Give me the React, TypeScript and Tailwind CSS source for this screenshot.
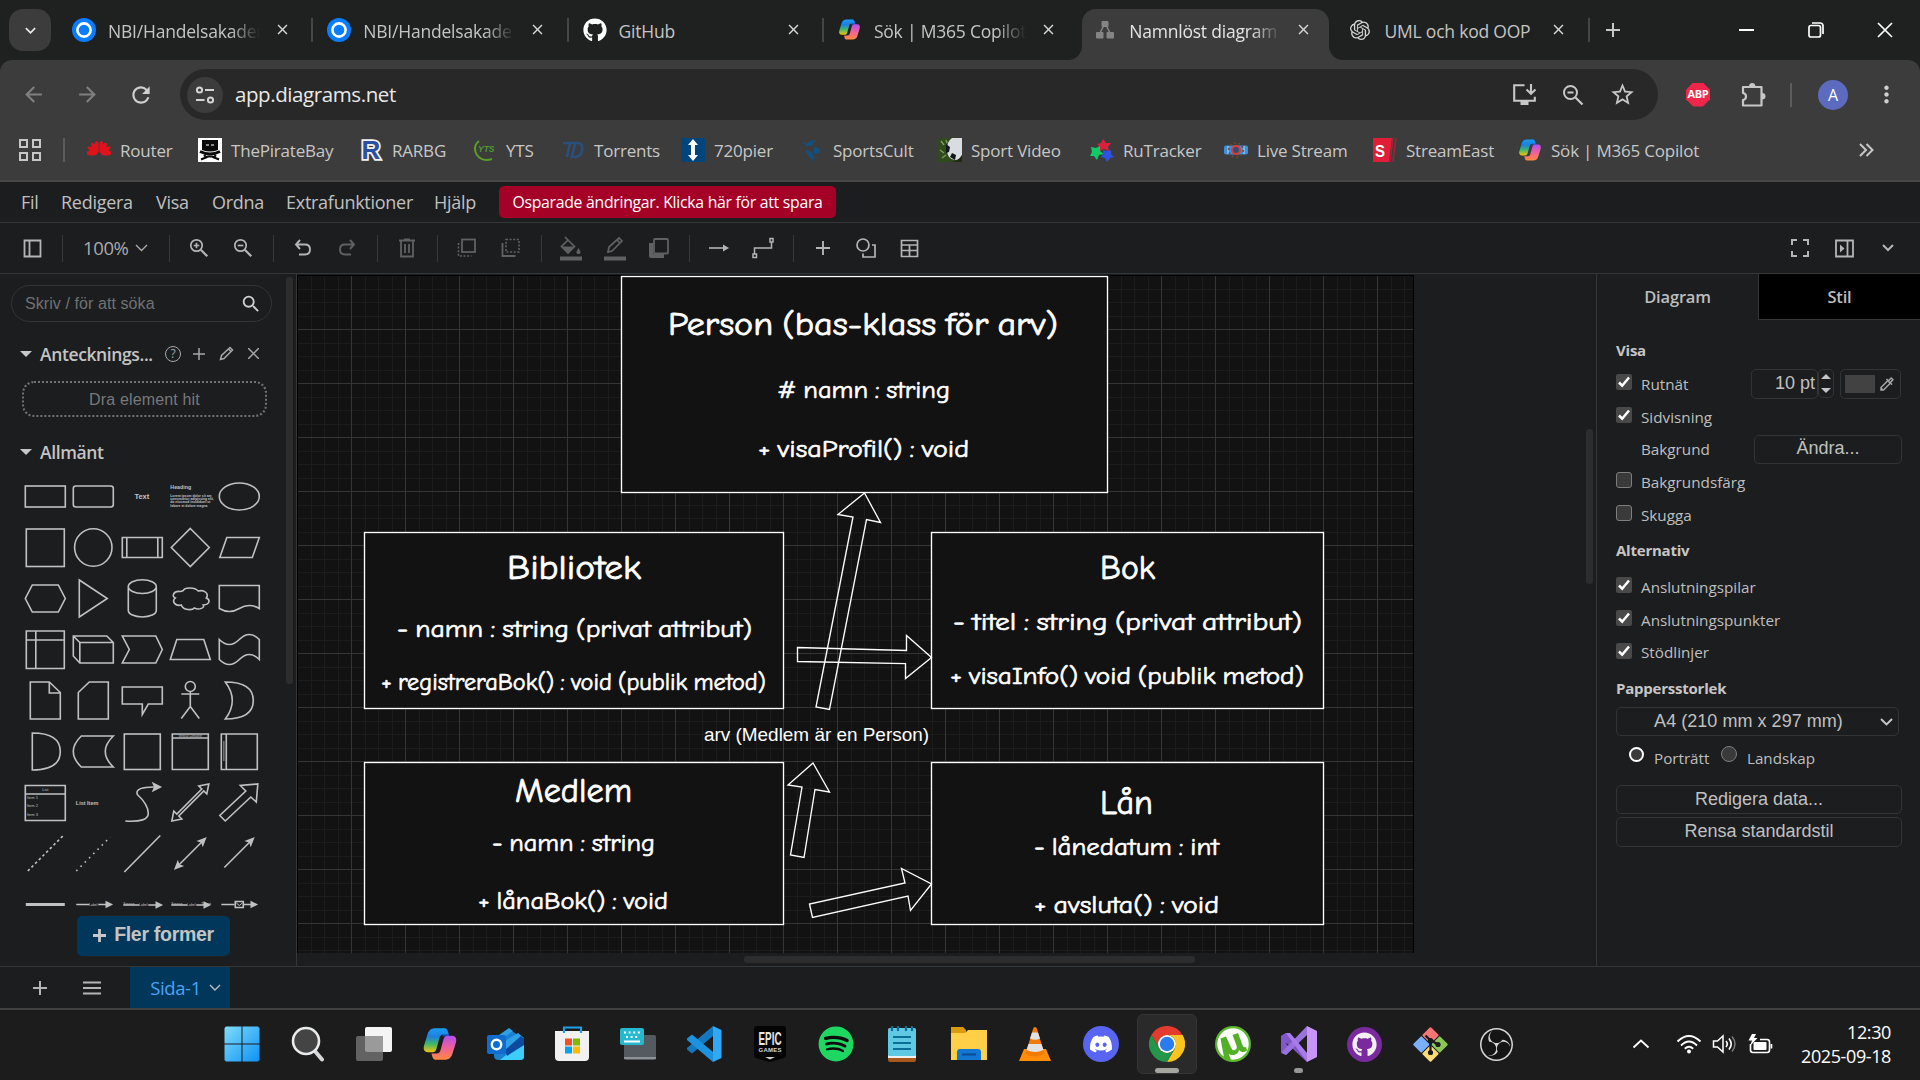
import React from "react";
import {
  FaGithub,
  FaSpotify,
  FaDiscord,
} from "react-icons/fa";
import { SiOpenai, SiObsstudio } from "react-icons/si";
import {
  MdArrowBack,
  MdArrowForward,
  MdRefresh,
  MdClose,
  MdStarBorder,
  MdMoreVert,
  MdKeyboardArrowDown,
  MdAdd,
  MdSearch,
  MdOutlineColorize,
} from "react-icons/md";

type Children = { children?: React.ReactNode };

function Svg({ w, h, vb, children }: { w: number; h: number; vb: string } & Children) {
  return (
    <svg width={w} height={h} viewBox={vb} fill="none" className="shrink-0">
      {children}
    </svg>
  );
}

function Copilot({ size, id }: { size: number; id: string }) {
  const d =
    "M9 1.5h6c1.2 0 1.8 1 2.1 2l.6 2.2H14.2c-1.5 0-2.2 1-2.5 2L9.6 15.3c-.4 1.3-1.1 2.2-2.5 2.2H4C1.600 17.500.6 15.500 1.400 13L3.700 5.500C4.500 2.900 6 1.500 9 1.500z";
  return (
    <Svg w={size} h={size} vb="0 0 24 24">
      <defs>
        <linearGradient id={id + "a"} x1="0" y1="0" x2="0" y2="1">
          <stop offset="0" stopColor="#1a9df0" />
          <stop offset=".35" stopColor="#1d7fe0" />
          <stop offset=".65" stopColor="#3fb86a" />
          <stop offset="1" stopColor="#f2c40c" />
        </linearGradient>
        <linearGradient id={id + "b"} x1="0" y1="1" x2="0" y2="0">
          <stop offset="0" stopColor="#b04ff0" />
          <stop offset=".5" stopColor="#f0609a" />
          <stop offset="1" stopColor="#ff8a3c" />
        </linearGradient>
      </defs>
      <path d="M13 1.500h2.200c1.200 0 1.800 1 2.100 2l1 3.500h-4.500z" fill="#1549b8" />
      <path d={d} fill={`url(#${id}a)`} />
      <path d={d} fill={`url(#${id}b)`} transform="rotate(180 12 12)" />
    </Svg>
  );
}

function ItsLearning() {
  return (
    <Svg w={24} h={24} vb="0 0 24 24">
      <circle cx="12" cy="12" r="12" fill="#0a7cff" />
      <circle cx="12" cy="12" r="6.600" stroke="#fff" strokeWidth="2.600" />
    </Svg>
  );
}

function DiagramFavicon() {
  return (
    <Svg w={20} h={20} vb="0 0 20 20">
      <path d="M9 5L4 15M11 5l5 10" stroke="#858585" strokeWidth="1.600" />
      <rect x="6.500" y="1" width="7" height="6" rx="1" fill="#858585" />
      <rect x="1" y="12" width="7.500" height="6.500" rx="1" fill="#858585" />
      <rect x="11.500" y="12" width="7.500" height="6.500" rx="1" fill="#858585" />
    </Svg>
  );
}

function Tab({ icon, label, active, fade }: { icon: React.ReactNode; label: string; active?: boolean; fade?: boolean }) {
  return (
    <div className="relative flex h-[60px] w-[255.300px] shrink-0 items-center pb-[1px]">
      {active && (
        <>
          <div className="absolute top-[9px] left-[4px] h-[51px] w-[247px] rounded-t-[14px] bg-[#3c3c3c]" />
          <svg className="absolute bottom-0 left-[-10px]" width="14" height="14" viewBox="0 0 14 14">
            <path d="M14 0v14H0A14 14 0 0 0 14 0z" fill="#3c3c3c" />
          </svg>
          <svg className="absolute bottom-0 left-[251px]" width="14" height="14" viewBox="0 0 14 14">
            <path d="M0 0v14h14A14 14 0 0 1 0 0z" fill="#3c3c3c" />
          </svg>
        </>
      )}
      <div className="relative ml-[14px] flex w-[26px] justify-center">{icon}</div>
      <div
        className={
          "relative ml-[11px] w-[152px] pt-[3px] text-[17.500px] leading-[26px] whitespace-nowrap tracking-[-0.012em] " +
          (active ? "text-[#e4e4e4]" : "text-[#c4c4c4]") +
          (fade ? " [mask-image:linear-gradient(to_right,#000_122px,transparent_152px)]" : "")
        }
      >
        {label}
      </div>
      <MdClose className="relative ml-[14px] text-[17px] text-[#d8d8d8]" />
    </div>
  );
}

function TabSep() {
  return <div className="relative z-10 -mx-[1px] h-[24px] w-[2px] shrink-0 self-center bg-[#444645]" />;
}

function Bookmark({ icon, label, w }: { icon: React.ReactNode; label: string; w: string }) {
  return (
    <div className={"flex shrink-0 items-center " + w}>
      <div className="flex w-[24px] shrink-0 justify-center">{icon}</div>
      <span className="ml-[9px] pt-[1px] text-[17px] leading-[24px] whitespace-nowrap tracking-[-0.012em] text-[#c7c7c7]">{label}</span>
    </div>
  );
}

const bookmarks: { label: string; w: string; icon: React.ReactNode }[] = [
  {
    label: "Router",
    w: "w-[111px]",
    icon: (
      <Svg w={24} h={20} vb="0 0 24 20">
        <g fill="#e2121c">
          {[-84, -58, -34, -12, 12, 34, 58, 84].map((a) => (
            <ellipse key={a} cx="12" cy="6.500" rx="2.300" ry="5.800" transform={`rotate(${a} 12 14)`} />
          ))}
        </g>
        <path d="M12 0v14M12 14L3 18M12 14l9 4" stroke="#3c3c3c" strokeWidth=".8" />
      </Svg>
    ),
  },
  {
    label: "ThePirateBay",
    w: "w-[161px]",
    icon: (
      <Svg w={24} h={24} vb="0 0 24 24">
        <rect width="24" height="24" fill="#fff" />
        <path d="M4 2h16v10q-8 3-16 0z" fill="#0a0a0a" />
        <path d="M8 6h3v2H8zM13 6h3v2h-3z" fill="#8a8a8a" />
        <path d="M2 13.500q10 5 20 0" stroke="#0a0a0a" strokeWidth="3" />
        <path d="M3 21.500l7-3h4l7 3M6 17l3 3M18 17l-3 3" stroke="#0a0a0a" strokeWidth="2" />
      </Svg>
    ),
  },
  {
    label: "RARBG",
    w: "w-[114px]",
    icon: (
      <Svg w={24} h={24} vb="0 0 24 24">
        <text x="2.500" y="21" fontFamily="Liberation Sans, sans-serif" fontWeight="700" fontSize="26" fill="#2b4fa3" stroke="#f2f2f2" strokeWidth="3.600" paintOrder="stroke">
          R
        </text>
      </Svg>
    ),
  },
  {
    label: "YTS",
    w: "w-[88px]",
    icon: (
      <Svg w={24} h={24} vb="0 0 24 24">
        <path d="M6 3Q-1 9 4 17q5 7 15 4" stroke="#5a9e2a" strokeWidth="2" />
        <text x="5" y="14" fontFamily="Liberation Sans, sans-serif" fontStyle="italic" fontWeight="700" fontSize="8.500" fill="#4f9a2c">
          YTS
        </text>
      </Svg>
    ),
  },
  {
    label: "Torrents",
    w: "w-[120px]",
    icon: (
      <Svg w={24} h={24} vb="0 0 24 24">
        <path d="M2 5h12M9 5L6 19M14 5h3q5 0 4 7t-7 7h-3l3-14" stroke="#2b4f7c" strokeWidth="2.600" />
      </Svg>
    ),
  },
  {
    label: "720pier",
    w: "w-[119px]",
    icon: (
      <Svg w={24} h={24} vb="0 0 24 24">
        <rect width="24" height="24" rx="1" fill="#00467c" />
        <path d="M12 1l5 6h-3v10h3l-5 6-5-6h3V7H7z" fill="#fff" />
      </Svg>
    ),
  },
  {
    label: "SportsCult",
    w: "w-[138px]",
    icon: (
      <Svg w={24} h={24} vb="0 0 24 24">
        <path d="M16 2Q6 3 5 9l7-2zM5 12q3 8 10 11l-3-9zM14 9q6 0 6 4t-6 2zM3 5l3-1-1 3z" fill="#12507f" />
      </Svg>
    ),
  },
  {
    label: "Sport Video",
    w: "w-[152px]",
    icon: (
      <Svg w={24} h={24} vb="0 0 24 24">
        <rect width="24" height="24" fill="#2f4a1c" />
        <path d="M3 3l3 4M2 12l4 3M4 20l4-3M8 2l1 3" stroke="#7d9a5a" strokeWidth="1.500" />
        <path d="M24 0v17q-2 5-7 5-8-1-8-10Q9 3 14 0z" fill="#d9dce0" />
        <path d="M8 6l4 3-1 5-3 1zM14 15l4 2-1 5-5-3z" fill="#15181a" />
        <path d="M24 17v7H12q8 0 12-7z" fill="#1c2b12" />
      </Svg>
    ),
  },
  {
    label: "RuTracker",
    w: "w-[134px]",
    icon: (
      <Svg w={24} h={24} vb="0 0 24 24">
        <path d="M13 1l3 4 5 0-3 4 1 4-5-2-4 2 0-4-3-3 4-1z" fill="#d9213c" />
        <path d="M1 9l5 1 4-2 0 5 4 3-5 1-2 5-3-4-4 0 2-4z" fill="#12c968" />
        <path d="M13 12l4 1 4-1 0 4 3 3-4 1-3 4-2-4-4-1 2-3z" fill="#2f52e0" />
      </Svg>
    ),
  },
  {
    label: "Live Stream",
    w: "w-[149px]",
    icon: (
      <Svg w={24} h={24} vb="0 0 24 24">
        <rect x="0" y="7.500" width="24" height="9" rx="2" fill="#3d8fdc" />
        <path d="M4 8v8M20 8v8" stroke="#8cc4f2" strokeWidth="1.500" />
        <circle cx="12" cy="12" r="7.200" stroke="#6b4a35" strokeWidth="1.600" strokeDasharray="2 2.500" />
        <circle cx="12" cy="12" r="4" fill="#27507a" stroke="#e03a2f" strokeWidth="2.200" />
      </Svg>
    ),
  },
  {
    label: "StreamEast",
    w: "w-[145px]",
    icon: (
      <Svg w={24} h={24} vb="0 0 24 24">
        <path d="M0 0h19l-3 24H0z" fill="#e01e37" />
        <path d="M20 0l-3 24M23 0l-3 24" stroke="#9c2537" strokeWidth="1.500" />
        <text x="2" y="19" fontFamily="Liberation Sans, sans-serif" fontWeight="700" fontSize="17" textLength="10" lengthAdjust="spacingAndGlyphs" fill="#fff">
          S
        </text>
      </Svg>
    ),
  },
  { label: "Sök | M365 Copilot", w: "w-[190px]", icon: <Copilot size={24} id="bm" /> },
];

function IconBtn({ children, dim }: { dim?: boolean } & Children) {
  return (
    <div className={"flex h-full w-[44px] shrink-0 items-center justify-center " + (dim ? "text-[#606163]" : "text-[#b4b5b6]")}>
      {children}
    </div>
  );
}

function ToolSep() {
  return (
    <div className="flex w-[16px] shrink-0 justify-center">
      <div className="h-[27px] w-px bg-[#37383a]" />
    </div>
  );
}

function Magnifier({ sign }: { sign: "plus" | "minus" }) {
  return (
    <Svg w={20} h={20} vb="0 0 20 20">
      <g stroke="currentColor" strokeWidth="1.700">
        <circle cx="7.500" cy="7.500" r="5.700" />
        <path d="M11.800 11.800l6.500 6.500" strokeWidth="2.200" />
        <path d={sign === "plus" ? "M4.700 7.500h5.600M7.500 4.700v5.600" : "M4.700 7.500h5.600"} />
      </g>
    </Svg>
  );
}

const S = "#c0c1c2";

function Cell({ children }: Children) {
  return (
    <svg width="48.600" height="51" viewBox="-24.300 -25.500 48.600 51" fill="none" stroke={S} strokeWidth="1.600">
      {children}
    </svg>
  );
}

function Tiny({ x, y, size, children, bold, anchor }: { x: number; y: number; size: number; bold?: boolean; anchor?: "middle" } & Children) {
  return (
    <text x={x} y={y} fontSize={size} fontFamily="Liberation Sans, sans-serif" fontWeight={bold ? 700 : 400} fill={S} stroke="none" textAnchor={anchor}>
      {children}
    </text>
  );
}

const shapes: React.ReactNode[] = [
  <rect x="-20" y="-10.500" width="40" height="21" />,
  <rect x="-20" y="-10.500" width="40" height="21" rx="2.500" />,
  <Tiny x={-0.5} y={2.5} size={7.500} anchor="middle" bold>Text</Tiny>,
  <>
    <Tiny x={-20} y={-7.500} size={5.300} bold>Heading</Tiny>
    <Tiny x={-20} y={0} size={3.400} bold>Lorem ipsum dolor sit am</Tiny>
    <Tiny x={-20} y={3.500} size={3.400} bold>consectetur adipiscing elit,</Tiny>
    <Tiny x={-20} y={7} size={3.400} bold>do eiusmod incididunt ut</Tiny>
    <Tiny x={-20} y={10.500} size={3.400} bold>labore et dolore magna</Tiny>
  </>,
  <ellipse rx="20" ry="13.500" />,

  <rect x="-19" y="-18.500" width="38" height="37.500" />,
  <circle r="18.700" />,
  <path d="M-20-10h40v20h-40zM-15.500-10v20M15.500-10v20" />,
  <path d="M0-19L19 0 0 19-19 0z" />,
  <path d="M-12.500-10H20L13 10H-19.500z" />,

  <path d="M-13-13.500H13L20 0 13 13.500H-13L-20 0z" />,
  <path d="M-14-18.500L14 0-14 18.500z" />,
  <path d="M-14-12a14 6.800 0 0 1 28 0V12a14 6.500 0 0 1-28 0zM-14-12a14 7 0 0 0 28 0" />,
  <path d="M-10-7C-17-8-19-2-15-.5-19 3-15 8-9 6.500-7 12 2 12 4 9.500 9 12 15 9 13 6.500 20 6 20 1 16-.500 19-5 14-9 8-7.500 4-12-6-11-7-8-8-7.500-9-7-10-7z" />,
  <path d="M-20-13H20V10Q10 4 0 10T-20 10z" />,

  <path d="M-19-18.500h38v37.500h-38zM-19-9.500h38M-9.500-18.500v37.500" />,
  <path d="M-20-13.500H13.500L20-7V13.500H-13.500L-20 6.500zM-20-13.500L-13.500-7H20M-13.500-7V13.500" />,
  <path d="M-20-13.500H13.500L20 0 13.500 13.500H-20L-13 0z" />,
  <path d="M-13.500-10H13.500L20 10H-20z" />,
  <path d="M-20-10Q-10 0 0-10T20-10V10Q10 0 0 10T-20 10z" />,

  <path d="M-15-18.500H4L15-8V18.500H-15zM4-18.500V-7.500H15" />,
  <path d="M-4-18.500H15V18.500H-15V-8z" />,
  <path d="M-20-13.500H20V3.500H6L0 14V3.500H-20z" />,
  <path d="M0-9V6M-9-6.500H9M0 6L-9 18M0 6L9 18M5-14A5 5 0 1 1-5-14 5 5 0 1 1 5-14" />,
  <path d="M-14-18.500Q14-18.500 14 0T-14 18.500Q0 0-14-18.500z" />,

  <path d="M-13-18.500Q15-18.500 15 0T-13 18.500z" />,
  <path d="M-12-15.500H20Q4 0 20 15.500H-12Q-28 0-12-15.500z" />,
  <rect x="-18" y="-17.500" width="36" height="35.500" />,
  <>
    <path d="M-18-17.500h36v35.500h-36zM-18-13.500h36" />
    <Tiny x={0} y={-14.500} size={3} anchor="middle">Vertical Container</Tiny>
  </>,
  <>
    <path d="M-18-17.500h36v35.500h-36zM-13-17.500v35.500" />
    <path d="M-15.500-10v20" strokeDasharray="1 1" />
  </>,

  <>
    <path d="M-20-17h40V18h-40zM-20-8.500h40" />
    <Tiny x={0} y={-11.500} size={4} anchor="middle">List</Tiny>
    <Tiny x={-18.500} y={-3.500} size={4}>Item 1</Tiny>
    <Tiny x={-18.500} y={5} size={4}>Item 2</Tiny>
    <Tiny x={-18.500} y={13.500} size={4}>Item 3</Tiny>
  </>,
  <Tiny x={-17.5} y={2} size={5.500} bold>List Item</Tiny>,
  <>
    <path d="M-17 18.500Q6 20 6 11T-5-8Q-8-16 14-15.500" />
    <path d="M18-15.500L11-19l1.500 3.500L11-12z" fill={S} />
  </>,
  <path d="M18.500-18.500L16.500-8.500 13.500-11.500-11.500 13.500-8.500 16.500-18.500 18.500-16.500 8.500-13.500 11.500 11.500-13.500 8.500-16.500z" />,
  <path d="M18.500-18.500L17-0.500 11.500-5.500-14 18.500-19.500 13 6.500-11.500 1-17z" />,

  <path d="M-17.500 17.500L17.500-17.500" strokeDasharray="2.600 2.600" />,
  <path d="M-17 17.500L17-16.500" strokeDasharray="1.600 4.400" />,
  <path d="M-18 18.500L18-18" />,
  <>
    <path d="M-13 13L13-13" />
    <path d="M15-15L8.500-12.500l3 1 1 3zM-15 15L-8.500 12.500l-3-1-1-3z" fill={S} />
  </>,
  <>
    <path d="M-15 14L12-13" />
    <path d="M14-15L7.500-12.500l3 1 1 3z" fill={S} />
  </>,

  <path d="M-19.500 0h39" strokeWidth="3.200" />,
  <>
    <path d="M-17 0h13M5 0h10" />
    <path d="M18 0l-5-2.500v5z" fill={S} />
    <Tiny x={0} y={1} size={3.500} anchor="middle">Label</Tiny>
  </>,
  <>
    <path d="M-19 .5h16M6 .5h9" />
    <path d="M19 .5l-5-2.500v5z" fill={S} />
    <Tiny x={-19} y={0} size={3.500}>Source</Tiny>
    <Tiny x={1} y={1} size={3.500} anchor="middle">Label</Tiny>
  </>,
  <>
    <path d="M-19 .5h16M6 .5h9" />
    <path d="M19 .5l-5-2.500v5z" fill={S} />
    <Tiny x={-19} y={0} size={3.500}>Source</Tiny>
    <Tiny x={1} y={1} size={3.500} anchor="middle">Label</Tiny>
    <Tiny x={11} y={0} size={3.500}>Target</Tiny>
  </>,
  <>
    <path d="M-18 0h13M4 0h10M-4-3h8v6h-8z" />
    <path d="M17 0l-5-2.500v5z" fill={S} />
    <path d="M-3-1.500L0 1 3-1.500" strokeWidth="1" />
  </>,
];

type Label = { t: string; x: number; y: number; w: number; s: number };

const nodes: { x: number; y: number; w: number; h: number; labels: Label[] }[] = [
  {
    x: 621.500, y: 276.500, w: 486, h: 216,
    labels: [
      { t: "Person (bas-klass för arv)", x: 668, y: 335, w: 390, s: 33 },
      { t: "# namn : string", x: 777, y: 397.500, w: 173, s: 25 },
      { t: "+ visaProfil() : void", x: 758, y: 456.500, w: 211, s: 25 },
    ],
  },
  {
    x: 364.500, y: 532.500, w: 419, h: 176,
    labels: [
      { t: "Bibliotek", x: 507, y: 579, w: 134, s: 34 },
      { t: "- namn : string (privat attribut)", x: 397, y: 636.500, w: 355, s: 25 },
      { t: "+ registreraBok() : void (publik metod)", x: 381, y: 690, w: 385, s: 24 },
    ],
  },
  {
    x: 931.500, y: 532.500, w: 392, h: 176,
    labels: [
      { t: "Bok", x: 1100, y: 579, w: 55, s: 34 },
      { t: "- titel : string (privat attribut)", x: 953, y: 629.500, w: 349, s: 25 },
      { t: "+ visaInfo() void (publik metod)", x: 950, y: 683.500, w: 354, s: 25 },
    ],
  },
  {
    x: 364.500, y: 762.500, w: 419, h: 162,
    labels: [
      { t: "Medlem", x: 515, y: 802, w: 117, s: 34 },
      { t: "- namn : string", x: 492, y: 851, w: 163, s: 25 },
      { t: "+ lånaBok() : void", x: 478, y: 908.500, w: 190, s: 25 },
    ],
  },
  {
    x: 931.500, y: 762.500, w: 392, h: 162,
    labels: [
      { t: "Lån", x: 1100, y: 814, w: 53, s: 34 },
      { t: "- lånedatum : int", x: 1034, y: 855, w: 185, s: 25 },
      { t: "+ avsluta() : void", x: 1034, y: 913, w: 185, s: 25 },
    ],
  },
];

const arrows = [
  "864.500,493 838,514.500 853,517 816,707 829.500,709.500 866.500,519.500 880.500,522.500",
  "797.500,647.500 797.500,661.500 905.500,663.700 905.500,678.500 931.500,657.500 906.500,635.500 906.500,650.500",
  "813,763 788,785 802,787 790.500,855 804,857.500 815,789.500 829.500,792",
  "809.500,904 812.500,917.500 908,896 910.500,910.500 931.500,884 901.500,868.500 905,883",
];

function gridLines(start: number, end: number, first: number) {
  const out: { p: number; major: boolean }[] = [];
  for (let i = 0; first + i * 13.5 < end; i++) {
    const p = first + i * 13.5;
    if (p > start) out.push({ p: Math.floor(p) + 0.5, major: i % 4 === 0 });
  }
  return out;
}

function Canvas() {
  const vx = gridLines(298, 1414, 297.5);
  const hy = gridLines(276, 952, 275.5);
  return (
    <svg width="1117" height="678" viewBox="297 275 1117 678" fill="none" className="block">
      <rect x="297" y="275" width="1117" height="678" fill="#121212" />
      {[false, true].map((m) => (
        <g key={String(m)} stroke={m ? "#353535" : "#1c1c1c"} strokeWidth="1">
          {vx.filter((l) => l.major === m).map((l) => (
            <path key={"v" + l.p} d={`M${l.p} 275V953`} />
          ))}
          {hy.filter((l) => l.major === m).map((l) => (
            <path key={"h" + l.p} d={`M297 ${l.p}H1414`} />
          ))}
        </g>
      ))}
      <path d="M297.500 953V275.500H1413.500V953" stroke="#000" />
      {nodes.map((n) => (
        <g key={n.labels[0].t}>
          <rect x={n.x} y={n.y} width={n.w} height={n.h} fill="#121212" stroke="#fff" strokeWidth="1.350" />
          {n.labels.map((l) => (
            <text
              key={l.t}
              x={l.x}
              y={l.y}
              textLength={l.w}
              lengthAdjust="spacingAndGlyphs"
              fontSize={l.s}
              wordSpacing="-0.080em"
              fontFamily="'Comic Sans MS', 'Comic Neue', 'Noto Sans', sans-serif"
              fill="#fff"
              stroke="#fff"
              strokeWidth={l.s > 30 ? 0.8 : 0.65}
            >
              {l.t}
            </text>
          ))}
        </g>
      ))}
      {arrows.map((a) => (
        <polygon key={a} points={a} stroke="#fff" strokeWidth="1.350" />
      ))}
      <text x="704" y="741" fontSize="18.500" textLength="225" lengthAdjust="spacingAndGlyphs" fill="#fff" fontFamily="'Liberation Sans', Arial, sans-serif">
        arv (Medlem är en Person)
      </text>
    </svg>
  );
}

function Check({ on }: { on?: boolean }) {
  return on ? (
    <div className="mb-[3px] flex h-[16px] w-[16px] items-center justify-center rounded-[2px] bg-[#494949]">
      <Svg w={14} h={14} vb="0 0 14 14">
        <path d="M2 7.500l3.200 3.200L12 2.500" stroke="#fff" strokeWidth="2.500" />
      </Svg>
    </div>
  ) : (
    <div className="mb-[3px] h-[16px] w-[16px] rounded-[3px] border border-[#7e7e7e] bg-[#3a3a3a]" />
  );
}

function PanelRow({ label, check, h, children }: { label: string; check?: "on" | "off"; h: string } & Children) {
  return (
    <div className={"flex items-center " + h}>
      <div className="w-[25px] shrink-0">{check && <Check on={check === "on"} />}</div>
      <span className="pt-[1px] text-[15.250px] whitespace-nowrap text-[#bfbfbf]">{label}</span>
      {children}
    </div>
  );
}

function Task({ children, state }: { state?: "active" | "open" } & Children) {
  return (
    <div className="relative flex h-[70px] w-[66.050px] shrink-0 items-center justify-center">
      {state === "active" && <div className="absolute top-[4px] left-[3px] h-[60px] w-[60px] rounded-[6px] border border-[#353535] bg-[#2a2a2a]" />}
      <div className="relative -mt-[2px] flex">{children}</div>
      {state === "active" && <div className="absolute top-[58px] h-[5px] w-[24px] rounded-full bg-[#a5a5a0]" />}
      {state === "open" && <div className="absolute top-[58px] h-[5px] w-[9px] rounded-full bg-[#969696]" />}
    </div>
  );
}

function Taskbar() {
  return (
    <div className="flex h-[72px] border-t-2 border-[#404040] bg-[#1c1c1c] pl-[209px]">
      <Task>
        <Svg w={36} h={36} vb="0 0 36 36">
          <defs>
            <linearGradient id="win" x1="0" y1="0" x2="1" y2="1">
              <stop offset="0" stopColor="#7fdcfb" />
              <stop offset="1" stopColor="#0d92f4" />
            </linearGradient>
          </defs>
          <path d="M2 .5h15.500v17H.5V2zM18.500.5H34l1.500 1.500v15.500h-17zM.5 18.500h17v17H2L.5 34zM18.500 18.500h17V34L34 35.500H18.500z" fill="url(#win)" />
        </Svg>
      </Task>
      <Task>
        <Svg w={34} h={36} vb="0 0 34 36">
          <path d="M23 24l8 9.500" stroke="#d5d8da" strokeWidth="4" strokeLinecap="round" />
          <circle cx="15" cy="15" r="13" fill="#444" stroke="#e8eaeb" strokeWidth="2.600" />
        </Svg>
      </Task>
      <Task>
        <Svg w={38} h={34} vb="0 0 38 34">
          <rect x="10" y="0" width="27" height="25" rx="2" fill="#f4f4f4" />
          <rect x="1" y="9" width="27" height="25" rx="2" fill="#626262" />
          <path d="M10 9h18v16H12q-2 0-2-2z" fill="#9a9a9a" />
        </Svg>
      </Task>
      <Task>
        <Copilot size={36} id="tb" />
      </Task>
      <Task>
        <Svg w={38} h={34} vb="0 0 38 34">
          <path d="M7 12L22 2l15 10v17q0 4-4 4H12q-5 0-5-4z" fill="#1b7fd0" />
          <path d="M12 8L22 1l4 3-14 10zM16 15L31 6l6 5-18 13z" fill="#2f9fe6" />
          <path d="M37 13v17q0 3-4 3H13z" fill="#3ccdf8" />
          <path d="M18 23L34 9l3 3v6L20 29z" fill="#0a4aa0" />
          <rect x="0" y="8" width="19" height="19" rx="2" fill="#0f6cd0" />
          <circle cx="9.500" cy="17.500" r="4.700" stroke="#fff" strokeWidth="2.400" />
        </Svg>
      </Task>
      <Task>
        <Svg w={36} h={36} vb="0 0 36 36">
          <path d="M10 8V1.500h17V8" stroke="#1fa0e8" strokeWidth="2.200" />
          <path d="M1 5h34v26q0 4-4 4H5q-4 0-4-4z" fill="#f1f1f1" />
          <path d="M10 7V5M27 7V5" stroke="#1fa0e8" strokeWidth="2.200" />
          <path d="M11 12.500h7v7h-7z" fill="#f25022" />
          <path d="M19 12.500h7v7h-7z" fill="#7fba00" />
          <path d="M11 20.500h7v7h-7z" fill="#00a4ef" />
          <path d="M19 20.500h7v7h-7z" fill="#ffb900" />
        </Svg>
      </Task>
      <Task>
        <Svg w={38} h={34} vb="0 0 38 34">
          <rect x="5" y="8" width="32" height="25" rx="2" fill="#545a60" />
          <path d="M5 31h32" stroke="#8d9297" strokeWidth="2" />
          <rect x="1" y="1" width="24" height="17" rx="2" fill="#25b9cf" />
          <path d="M5 5.500h16M7 10h12" stroke="#fff" strokeWidth="2" strokeDasharray="2 2.600" />
          <path d="M5 14.500h16" stroke="#fff" strokeWidth="2" />
        </Svg>
      </Task>
      <Task>
        <Svg w={36} h={36} vb="0 0 36 36">
          <path d="M27 0v10L6 27.500l-5-4V22z" fill="#1378bf" />
          <path d="M27 36V26L6 8.500l-5 4V14z" fill="#1c93de" />
          <path d="M27 0l8.500 4v28L27 36z" fill="#2fa8f5" />
        </Svg>
      </Task>
      <Task>
        <Svg w={32} h={36} vb="0 0 32 36">
          <path d="M3 0h26q3 0 3 3v26q0 2-2 3l-14 4-14-4q-2-1-2-3V3q0-3 3-3z" fill="#050505" />
          <text x="16" y="18.500" textAnchor="middle" fontFamily="Liberation Sans, sans-serif" fontWeight="700" fontSize="19" textLength="23" lengthAdjust="spacingAndGlyphs" fill="#e8e8e8">EPIC</text>
          <text x="16" y="26" textAnchor="middle" fontFamily="Liberation Sans, sans-serif" fontWeight="700" fontSize="6" textLength="23" fill="#d8d8d8">GAMES</text>
          <path d="M11 31h10l-5 2.500z" fill="#ccc" />
        </Svg>
      </Task>
      <Task>
        <div className="relative flex h-[36px] w-[36px] items-center justify-center">
          <div className="absolute h-[26px] w-[26px] rounded-full bg-[#0c0c0c]" />
          <FaSpotify className="relative text-[36px] text-[#1ed760]" />
        </div>
      </Task>
      <Task>
        <Svg w={30} h={36} vb="0 0 30 36">
          <path d="M1 28h28v6q0 2-2 2H3q-2 0-2-2z" fill="#a8581b" />
          <path d="M1 28h28v4H1z" fill="#f0f0f0" />
          <rect x="1" y="2" width="28" height="28" rx="1.500" fill="#5fc8e2" />
          <path d="M5 0v5M11 0v5M19 0v5M25 0v5" stroke="#0b6e96" strokeWidth="2.200" />
          <path d="M6 11h18M6 17h18M6 23h18" stroke="#0b6e96" strokeWidth="2" />
        </Svg>
      </Task>
      <Task>
        <Svg w={38} h={34} vb="0 0 38 34">
          <path d="M1 0h12l3 3v8H1z" fill="#d99a0b" />
          <path d="M1 6h14l3-3h19v30H1z" fill="#ffcf48" />
          <path d="M7 33V25q0-3 3-3h18q3 0 3 3v8z" fill="#1277d2" />
          <path d="M12 27.500h14" stroke="#0b4c8f" strokeWidth="2" />
        </Svg>
      </Task>
      <Task>
        <Svg w={32} h={36} vb="0 0 32 36">
          <path d="M5 23h22l5 12H0z" fill="#ff8d0a" />
          <path d="M16 1q1.500 0 2 2l7.500 25q-9.500 5-19 0L14 3q.5-2 2-2z" fill="#f07c05" />
          <path d="M13 6.500h6l2 6q-5 2.500-10 0z" fill="#e2e2e2" />
          <path d="M9.500 18h13l2 6q-8.500 4-17 0z" fill="#e2e2e2" />
        </Svg>
      </Task>
      <Task>
        <div className="flex h-[36px] w-[36px] items-center justify-center rounded-full bg-[#5865f2]">
          <FaDiscord className="text-[24px] text-white" />
        </div>
      </Task>
      <Task state="active">
        <Svg w={36} h={36} vb="0 0 48 48">
          <path d="M3.200 12A24 24 0 0 1 44.800 12H24A12 12 0 0 0 13.600 30z" fill="#e33b2e" />
          <path d="M44.800 12A24 24 0 0 1 24 48L34.400 30A12 12 0 0 0 24 12z" fill="#fcc31e" />
          <path d="M24 48A24 24 0 0 1 3.200 12L13.600 30A12 12 0 0 0 34.400 30z" fill="#23964a" />
          <circle cx="24" cy="24" r="12" fill="#fff" />
          <circle cx="24" cy="24" r="9.600" fill="#2a7bf0" />
        </Svg>
      </Task>
      <Task>
        <Svg w={36} h={36} vb="0 0 36 36">
          <circle cx="18" cy="18" r="18" fill="#5cb82c" />
          <circle cx="18" cy="18" r="15.700" fill="#fff" />
          <path d="M5.500 12.500l5.500-2 5 11q1.500 3.500 4 2.500t1.500-4.500L17.500 9l5.500-2 4.500 12q1 3 3.500 2l1 3.500q-5 3.500-8-.5-1 4.500-5.500 5-3.500.5-5-1.500l2.500 6.500q-5 .5-7-2.500z" fill="#52b026" />
        </Svg>
      </Task>
      <Task state="open">
        <Svg w={36} h={36} vb="0 0 36 36">
          <path d="M0 10l5-3 21 22v7L0 12z" fill="#7d55c7" />
          <path d="M0 10v16l5 3 6-6-6-5 5-6-5-5z" fill="#8257c9" />
          <path d="M0 27L26 0v9L5 29z" fill="#9a72df" />
          <path d="M5 7L26 36V27L9 7z" fill="#a77ce8" />
          <path d="M26 0l10 5v26l-10 5z" fill="#c795f7" />
        </Svg>
      </Task>
      <Task>
        <div className="flex h-[35px] w-[35px] items-center justify-center rounded-full bg-[#7b2a9e]">
          <FaGithub className="text-[25px] text-[#f3f0f5]" />
        </div>
      </Task>
      <Task>
        <Svg w={37} h={37} vb="-18.500 -18.500 37 37">
          <g transform="rotate(45)">
            <rect x="-12.500" y="-12.500" width="12" height="12" rx="1" fill="#fb7575" />
            <rect x=".5" y="-12.500" width="12" height="12" rx="1" fill="#8ac858" />
            <rect x="-12.500" y=".5" width="12" height="12" rx="1" fill="#7ab0fb" />
            <rect x=".5" y=".5" width="12" height="12" rx="1" fill="#fddc75" />
          </g>
          <path d="M-5-9L0-4V9M0-5l7 5" stroke="#1b1b1b" strokeWidth="2.200" />
          <circle cx="0" cy="-4" r="2.600" fill="#1b1b1b" />
          <circle cx="0" cy="8" r="2.600" fill="#1b1b1b" />
          <circle cx="7.500" cy="0" r="2.600" fill="#1b1b1b" />
        </Svg>
      </Task>
      <Task>
        <div className="flex h-[33px] w-[33px] items-center justify-center rounded-full bg-[#151515]">
          <SiObsstudio className="text-[33px] text-[#d6d6d6]" />
        </div>
      </Task>
      <div className="ml-[102px] flex h-[68px] items-center">
        <Svg w={18} h={10} vb="0 0 18 10">
          <path d="M1.500 8.500L9 1.500l7.500 7" stroke="#fff" strokeWidth="1.800" />
        </Svg>
        <div className="ml-[26px] flex items-center gap-[10px]">
          <Svg w={26} h={20} vb="0 0 26 20">
            <g stroke="#fff" strokeWidth="1.900">
              <path d="M1.500 7.500q11.500-11 23 0M5 11.500q8-8 16 0M8.800 14.800q4.200-4 8.400 0" />
            </g>
            <circle cx="13" cy="17.500" r="2" fill="#fff" />
          </Svg>
          <Svg w={25} h={20} vb="0 0 25 20">
            <path d="M1.500 7h4L11 2v16l-5.500-5h-4z" stroke="#fff" strokeWidth="1.500" />
            <path d="M14 7q2.500 3 0 6M17 4.500q4.500 5.500 0 11" stroke="#fff" strokeWidth="1.600" />
            <path d="M20 2.500q6 7.500 0 15" stroke="#7a7a7a" strokeWidth="1.500" />
          </Svg>
          <Svg w={26} h={22} vb="0 0 26 22">
            <rect x="6.500" y="9" width="13" height="8" rx="1" fill="#fff" />
            <path d="M3.500 11v6q0 2.500 2.500 2.500h14q2.500 0 2.500-2.500V9q0-2.500-2.500-2.500h-7M24.500 11v4.500" stroke="#fff" strokeWidth="1.600" />
            <path d="M5 1L1.500 7.500H5L3 13l7.500-8H7L9 1z" fill="#fff" />
          </Svg>
        </div>
      </div>
      <div className="mr-[29px] ml-auto flex h-[68px] flex-col items-end justify-center text-[18px] leading-[24px] tracking-[-0.022em] text-white">
        <span>12:30</span>
        <span>2025-09-18</span>
      </div>
    </div>
  );
}

export default function App() {
  return (
    <div className="flex h-[1080px] w-[1920px] flex-col overflow-hidden bg-[#1c1d1f] font-['Segoe_UI','Open_Sans',sans-serif]">
      {/* Tab strip */}
      <div className="flex h-[60px] shrink-0 items-center bg-[#1f2120] pl-[9px]">
        <div className="flex h-[42px] w-[42px] items-center justify-center rounded-[14px] bg-[#3c3c3c]">
          <MdKeyboardArrowDown className="text-[21px] text-[#e6e6e6]" />
        </div>
        <div className="ml-[6px] flex items-center">
          <Tab icon={<ItsLearning />} label="NBI/Handelsakader" fade />
          <TabSep />
          <Tab icon={<ItsLearning />} label="NBI/Handelsakade" fade />
          <TabSep />
          <Tab icon={<FaGithub className="text-[24px] text-white" />} label="GitHub" />
          <TabSep />
          <Tab icon={<Copilot size={23} id="tab" />} label="Sök | M365 Copilot" fade />
          <Tab icon={<DiagramFavicon />} label="Namnlöst diagram" active fade />
          <Tab icon={<SiOpenai className="text-[20px] text-[#d6d6d6]" />} label="UML och kod OOP" />
          <TabSep />
        </div>
        <MdAdd className="ml-[12px] text-[24px] text-[#c8c8c8]" />
        <div className="ml-auto flex items-center gap-[53.500px] pr-[27px] text-white">
          <div className="h-[2px] w-[15px] bg-white" />
          <Svg w={16} h={16} vb="0 0 16 16">
            <rect x="1" y="3.500" width="11.500" height="11.500" rx="2" stroke="#fff" strokeWidth="1.700" />
            <path d="M4 1h8q3 0 3 3v8" stroke="#fff" strokeWidth="1.700" />
          </Svg>
          <Svg w={16} h={16} vb="0 0 16 16">
            <path d="M1 1l14 14M15 1L1 15" stroke="#fff" strokeWidth="1.700" />
          </Svg>
        </div>
      </div>

      {/* Address bar and bookmarks */}
      <div className="shrink-0 bg-[#1f2120]">
        <div className="h-[120px] rounded-t-[12px] bg-[#3c3c3c]">
          <div className="flex h-[69px] items-center">
            <MdArrowBack className="ml-[21px] text-[25px] text-[#808080]" />
            <MdArrowForward className="ml-[29px] text-[25px] text-[#808080]" />
            <MdRefresh className="ml-[28px] text-[26px] text-[#cfcfcf]" />
            <div className="ml-[26px] flex h-[51px] w-[1478px] items-center rounded-full bg-[#282828] pl-[7px]">
              <div className="flex h-[36px] w-[36px] items-center justify-center rounded-full bg-[#3c3c3c]">
                <Svg w={20} h={20} vb="0 0 20 20">
                  <g stroke="#d4d4d4" strokeWidth="2">
                    <circle cx="4.500" cy="5" r="2.600" />
                    <path d="M10 5h9M1 15h8.500" />
                    <circle cx="15.500" cy="15" r="2.600" />
                  </g>
                </Svg>
              </div>
              <span className="ml-[12px] text-[20.500px] tracking-[-0.020em] text-[#e8e8e8]">app.diagrams.net</span>
              <div className="ml-auto flex items-center gap-[24px] pr-[22px] text-[#c7c7c7]">
                <Svg w={25} h={22} vb="0 0 25 22">
                  <path d="M12.500 1.200H2.200v15.600h20.600v-4M19 0v9M14.500 5.500l4.500 4.200 4.500-4.200" stroke="currentColor" strokeWidth="2.100" />
                  <path d="M8.500 17h8v4h-8z" fill="currentColor" />
                </Svg>
                <Svg w={24} h={24} vb="0 0 24 24">
                  <g stroke="currentColor" strokeWidth="2">
                    <circle cx="9.500" cy="9.500" r="6.500" />
                    <path d="M14.500 14.500l7 7M6.500 9.500h6" strokeWidth="2.200" />
                  </g>
                </Svg>
                <MdStarBorder className="text-[27px]" />
              </div>
            </div>
            <div className="ml-[28px] flex h-[24px] w-[24px] items-center justify-center bg-[#f0254a] text-[11px] font-bold tracking-[-0.030em] text-white [clip-path:polygon(30%_0,70%_0,100%_30%,100%_70%,70%_100%,30%_100%,0_70%,0_30%)]">
              ABP
            </div>
            <div className="ml-[30px] w-[28px]">
              <Svg w={26} h={26} vb="0 0 26 26">
                <path d="M3 5h18.500v18.500H3v-5.500q3-.5 3-3.500t-3-3.500z" stroke="#c7c7c7" strokeWidth="2.200" strokeLinejoin="round" />
                <path d="M9 4.500a3.200 3.500 0 0 1 6.400 0zM22 11a3.500 3.200 0 0 1 0 6.400z" fill="#c7c7c7" />
              </Svg>
            </div>
            <div className="ml-[22px] h-[24px] w-[2px] bg-[#5c5c5c]" />
            <div className="ml-[26px] flex h-[30px] w-[30px] items-center justify-center rounded-full bg-[#5c6bc0] text-[16px] text-white">A</div>
            <MdMoreVert className="ml-[25px] text-[27px] text-[#d0d0d0]" />
          </div>
          <div className="flex h-[42px] items-center">
            <div className="ml-[19px] grid grid-cols-2 gap-[4px]">
              {[0, 1, 2, 3].map((i) => (
                <div key={i} className="h-[9px] w-[9px] border-2 border-[#c7c7c7]" />
              ))}
            </div>
            <div className="ml-[22px] h-[24px] w-[2px] bg-[#5c5c5c]" />
            <div className="ml-[22px] flex items-center">
              {bookmarks.map((b) => (
                <Bookmark key={b.label} {...b} />
              ))}
            </div>
            <div className="mr-[46px] ml-auto">
              <Svg w={16} h={14} vb="0 0 16 14">
                <path d="M2 1l6 6-6 6M8.500 1l6 6-6 6" stroke="#c7c7c7" strokeWidth="2" />
              </Svg>
            </div>
          </div>
        </div>
      </div>

      {/* Menu bar */}
      <div className="flex h-[43px] shrink-0 items-center border-t-2 border-b border-t-[#474747] border-b-[#353638] text-[18px] tracking-[-0.015em] text-[#c0c0c0]">
        <span className="ml-[21px] w-[40px] pt-[1px]">Fil</span>
        <span className="w-[95px] pt-[1px]">Redigera</span>
        <span className="w-[56px] pt-[1px]">Visa</span>
        <span className="w-[74px] pt-[1px]">Ordna</span>
        <span className="w-[148px] pt-[1px]">Extrafunktioner</span>
        <span className="w-[65px] pt-[1px]">Hjälp</span>
        <div className="flex h-[32px] w-[337px] items-center justify-center rounded-[5px] bg-[#a50026] pt-[2px] text-[15.800px] font-medium tracking-[-0.018em] whitespace-nowrap text-white">
          Osparade ändringar. Klicka här för att spara
        </div>
      </div>

      {/* Toolbar */}
      <div className="flex h-[51px] shrink-0 items-center border-b border-[#353638] pl-[10px]">
        <IconBtn>
          <Svg w={19} h={19} vb="0 0 19 19">
            <path d="M1.500 1.500h16v16h-16zM6.500 1.500v16" stroke="currentColor" strokeWidth="1.800" />
          </Svg>
        </IconBtn>
        <ToolSep />
        <div className="flex w-[91px] items-center gap-[6px] pl-[13px] text-[18.500px] tracking-[-0.020em] text-[#a9aaab]">
          100%
          <Svg w={13} h={8} vb="0 0 13 8">
            <path d="M1 1l5.500 5.500L12 1" stroke="#a9aaab" strokeWidth="1.400" />
          </Svg>
        </div>
        <ToolSep />
        <IconBtn><Magnifier sign="plus" /></IconBtn>
        <IconBtn><Magnifier sign="minus" /></IconBtn>
        <ToolSep />
        <IconBtn>
          <Svg w={18} h={18} vb="0 0 18 18">
            <path d="M6 1L2 5.500 6 10M2 5.500h9q5 0 5 5t-5 5H5" stroke="currentColor" strokeWidth="1.900" />
          </Svg>
        </IconBtn>
        <IconBtn dim>
          <Svg w={18} h={18} vb="0 0 18 18">
            <path d="M12 1l4 4.500L12 10M16 5.500H7q-5 0-5 5t5 5h6" stroke="currentColor" strokeWidth="1.900" />
          </Svg>
        </IconBtn>
        <ToolSep />
        <IconBtn dim>
          <Svg w={18} h={20} vb="0 0 18 20">
            <path d="M1 2.500h16M6 1.500h6M3 2.500v16h12v-16M7 6v9M11 6v9" stroke="currentColor" strokeWidth="1.800" />
          </Svg>
        </IconBtn>
        <ToolSep />
        <IconBtn dim>
          <Svg w={20} h={20} vb="0 0 20 20">
            <rect x="5" y="1.500" width="13" height="12.500" stroke="currentColor" strokeWidth="1.800" />
            <path d="M1.500 5v13h13" stroke="currentColor" strokeWidth="1.600" strokeDasharray="2 1.600" />
          </Svg>
        </IconBtn>
        <IconBtn dim>
          <Svg w={20} h={20} vb="0 0 20 20">
            <rect x="5" y="1.500" width="13" height="12.500" stroke="currentColor" strokeWidth="1.600" strokeDasharray="2 1.600" />
            <path d="M1.500 5v13h13" stroke="currentColor" strokeWidth="1.800" />
          </Svg>
        </IconBtn>
        <ToolSep />
        <IconBtn dim>
          <Svg w={22} h={25} vb="0 0 22 25">
            <path d="M5 1l9.500 9.500L8 17 1.500 10.500 8 4" stroke="currentColor" strokeWidth="1.700" />
            <path d="M2 10.500h12L8 17z" fill="currentColor" />
            <path d="M18.500 12q4 6 0 6t0-6z" fill="currentColor" />
            <path d="M0 20.500h22v4H0z" fill="currentColor" />
          </Svg>
        </IconBtn>
        <IconBtn dim>
          <Svg w={22} h={25} vb="0 0 22 25">
            <path d="M4 16l1-5L15 2l3 3-10 10zM13 4l3 3" stroke="currentColor" strokeWidth="1.700" />
            <path d="M0 20.500h22v4H0z" fill="currentColor" />
          </Svg>
        </IconBtn>
        <IconBtn dim>
          <Svg w={20} h={20} vb="0 0 20 20">
            <path d="M0 5h4v11h11v4H2q-2 0-2-2z" fill="currentColor" />
            <rect x="5" y="1" width="14" height="14.500" rx="1" stroke="currentColor" strokeWidth="1.800" />
          </Svg>
        </IconBtn>
        <ToolSep />
        <IconBtn>
          <Svg w={20} h={8} vb="0 0 20 8">
            <path d="M0 4h16" stroke="currentColor" strokeWidth="1.600" />
            <path d="M14 .5L20 4l-6 3.500z" fill="currentColor" />
          </Svg>
        </IconBtn>
        <IconBtn>
          <Svg w={22} h={22} vb="0 0 22 22">
            <path d="M2.500 17v-6h17V5M1 17h3.500v3.500H1zM18 1.500h3V5h-3z" stroke="currentColor" strokeWidth="1.500" />
          </Svg>
        </IconBtn>
        <ToolSep />
        <div className="flex h-full">
          <IconBtn>
            <Svg w={14} h={14} vb="0 0 14 14">
              <path d="M7 0v14M0 7h14" stroke="currentColor" strokeWidth="1.900" />
            </Svg>
          </IconBtn>
          <IconBtn>
            <div className="-ml-[2px]">
              <Svg w={20} h={20} vb="0 0 20 20">
                <circle cx="7" cy="7" r="6" stroke="currentColor" strokeWidth="1.700" />
                <path d="M16 7h3v12H7v-3.500" stroke="currentColor" strokeWidth="1.700" />
              </Svg>
            </div>
          </IconBtn>
          <IconBtn>
            <div className="-ml-[4px]">
              <Svg w={19} h={19} vb="0 0 19 19">
                <path d="M1.500 1.500h16v16h-16zM1.500 6h16M1.500 11.500h16M9.500 6v11.500" stroke="currentColor" strokeWidth="1.700" />
              </Svg>
            </div>
          </IconBtn>
        </div>
        <div className="mr-[10px] ml-auto flex h-full">
          <IconBtn>
            <Svg w={18} h={18} vb="0 0 18 18">
              <path d="M1 6V1h5M12 1h5v5M17 12v5h-5M6 17H1v-5" stroke="currentColor" strokeWidth="2" />
            </Svg>
          </IconBtn>
          <IconBtn>
            <Svg w={19} h={19} vb="0 0 19 19">
              <path d="M1 1.500h17v16H1zM12.500 1.500v16" stroke="currentColor" strokeWidth="1.800" />
              <path d="M5 5.500l4.500 4L5 13.500z" fill="currentColor" />
            </Svg>
          </IconBtn>
          <IconBtn>
            <Svg w={12} h={8} vb="0 0 12 8">
              <path d="M1 1l5 5 5-5" stroke="currentColor" strokeWidth="2" />
            </Svg>
          </IconBtn>
        </div>
      </div>

      {/* Workspace */}
      <div className="flex h-[692px] shrink-0">
        <div className="relative flex w-[297px] shrink-0 flex-col border-r border-[#353638]">
          <div className="absolute top-[3px] left-[286px] h-[407px] w-[7px] rounded-[3px] bg-[#2d2d2d]" />
          <div className="mt-[11px] ml-[11px] flex h-[37px] w-[261px] items-center justify-between rounded-full border border-[#333436] pr-[9px] pl-[13px]">
            <span className="text-[16px] tracking-[0.005em] text-[#707173] font-['Liberation_Sans',sans-serif]">Skriv / för att söka</span>
            <MdSearch className="text-[22px] text-[#d0d0d0]" />
          </div>
          <div className="mt-[17px] flex h-[29px] items-center pl-[20px]">
            <div className="h-0 w-0 border-x-[6px] border-t-[6px] border-x-transparent border-t-[#c8c8c8]" />
            <span className="ml-[8px] w-[122px] pt-[1px] text-[17.500px] font-semibold tracking-[-0.022em] text-[#c4c4c4]">Antecknings...</span>
            <div className="flex w-[110px] items-center text-[#a6a7a8]">
              <div className="ml-[3px] flex h-[16px] w-[16px] items-center justify-center rounded-full border-[1.500px] border-[#a6a7a8] text-[12px]">?</div>
              <div className="ml-[12px]"><Svg w={12} h={12} vb="0 0 12 12"><path d="M6 0v12M0 6h12" stroke="currentColor" strokeWidth="1.500" /></Svg></div>
              <div className="ml-[14px]"><Svg w={15} h={15} vb="0 0 15 15"><path d="M1.500 13.500l1-4L11 1.500l2.500 2.500-8.500 8.500zM9.500 3l2.500 2.500" stroke="currentColor" strokeWidth="1.500" /></Svg></div>
              <div className="ml-[14px]"><Svg w={11} h={11} vb="0 0 11 11"><path d="M0 0l11 11M11 0L0 11" stroke="currentColor" strokeWidth="1.500" /></Svg></div>
            </div>
          </div>
          <div className="mt-[13px] ml-[22px] flex h-[36px] w-[245px] items-center justify-center rounded-[12px] border-2 border-dotted border-[#727375] pt-[2px] font-['Liberation_Sans',sans-serif] text-[16px] tracking-[0.010em] text-[#77787a]">
            Dra element hit
          </div>
          <div className="mt-[20px] flex h-[29px] items-center pl-[20px]">
            <div className="h-0 w-0 border-x-[6px] border-t-[6px] border-x-transparent border-t-[#c8c8c8]" />
            <span className="ml-[8px] pt-[1px] text-[17.500px] font-semibold tracking-[-0.022em] text-[#c4c4c4]">Allmänt</span>
          </div>
          <div className="mt-[4.500px] ml-[20.700px] grid h-[442px] w-[243px] shrink-0 grid-cols-5 overflow-hidden">
            {shapes.map((s, i) => (
              <Cell key={i}>{s}</Cell>
            ))}
          </div>
          <div className="mt-[3.500px] ml-[77px] flex h-[40px] w-[153px] shrink-0 items-center justify-center gap-[8px] rounded-[5px] bg-[#00375a] pb-[2px] font-['Liberation_Sans',sans-serif] text-[19.500px] font-bold tracking-[-0.015em] text-[#c4c4c4]">
            <Svg w={13} h={13} vb="0 0 13 13"><path d="M6.500 0v13M0 6.500h13" stroke="#c8c8c8" strokeWidth="2.800" /></Svg>
            Fler former
          </div>
        </div>
        <div className="flex w-[1299px] flex-col">
          <div className="flex h-[679px]">
            <div className="pt-[1px]"><Canvas /></div>
            <div className="mt-[155px] ml-[172px] h-[155px] w-[7px] rounded-[3px] bg-[#2d2d2d]" />
          </div>
          <div className="mt-[3px] ml-[447px] h-[7px] w-[451px] rounded-[3px] bg-[#2d2d2d]" />
        </div>
        <div className="w-[324px] border-l border-[#353638]">
          <div className="flex h-[46px] text-[16.500px] font-semibold tracking-[-0.010em] text-[#bdbdbd]">
            <div className="flex w-[161px] items-center justify-center pt-[1px]">Diagram</div>
            <div className="flex flex-1 items-center justify-center border-b border-l border-[#353638] bg-black pt-[2px]">Stil</div>
          </div>
          <div className="pl-[19px]">
            <div className="mt-[14px] flex h-[33px] items-center text-[15px] font-bold tracking-[-0.015em] text-[#c6c6c6]">Visa</div>
            <PanelRow label="Rutnät" check="on" h="h-[33px]">
              <div className="ml-auto flex h-[30px] w-[67px] items-center justify-end rounded-[5px] border border-[#333436] pr-[2px] font-['Liberation_Sans',sans-serif] text-[18px] text-[#c0c0c0]">10 pt</div>
              <div className="flex h-[29px] w-[16px] flex-col items-center justify-center gap-[9px] rounded-[5px] border border-[#333436]">
                <div className="h-0 w-0 border-x-[5px] border-b-[5px] border-x-transparent border-b-[#c4c4c4]" />
                <div className="h-0 w-0 border-x-[5px] border-t-[5px] border-x-transparent border-t-[#c4c4c4]" />
              </div>
              <div className="mr-[19px] ml-[6px] flex h-[30px] w-[61px] items-center justify-between rounded-[5px] border border-[#333436] pr-[4px] pl-[4px]">
                <div className="h-[18px] w-[30px] bg-[#424242]" />
                <MdOutlineColorize className="text-[18px] text-[#a4a5a6]" />
              </div>
            </PanelRow>
            <PanelRow label="Sidvisning" check="on" h="h-[33px]" />
            <PanelRow label="Bakgrund" h="h-[32px]">
              <div className="mr-[18px] ml-auto flex h-[29px] w-[148px] items-center justify-center rounded-[5px] border border-[#333436] pb-[2px] font-['Liberation_Sans',sans-serif] text-[18px] text-[#c0c0c0]">Ändra...</div>
            </PanelRow>
            <PanelRow label="Bakgrundsfärg" check="off" h="h-[33px]" />
            <PanelRow label="Skugga" check="off" h="h-[33px]" />
            <div className="flex h-[39px] items-center text-[15px] font-bold tracking-[-0.015em] text-[#c6c6c6]">Alternativ</div>
            <PanelRow label="Anslutningspilar" check="on" h="h-[33px]" />
            <PanelRow label="Anslutningspunkter" check="on" h="h-[33px]" />
            <PanelRow label="Stödlinjer" check="on" h="h-[32px]" />
            <div className="mt-[1px] flex h-[38px] items-center text-[15px] font-bold tracking-[-0.015em] text-[#c6c6c6]">Pappersstorlek</div>
            <div className="flex h-[29px] w-[283px] items-center justify-center rounded-[5px] border border-[#333436] pr-[18px] font-['Liberation_Sans',sans-serif] text-[18px] text-[#c0c0c0]">
              <span className="flex-1 text-center tracking-[0.002em]">A4 (210 mm x 297 mm)</span>
              <div className="-mr-[13px] flex"><Svg w={13} h={8} vb="0 0 13 8"><path d="M1 1l5.500 5.500L12 1" stroke="#c8c8c8" strokeWidth="1.900" /></Svg></div>
            </div>
            <div className="flex h-[44px] items-center text-[15.200px] text-[#bfbfbf]">
              <div className="mb-[8px] ml-[13px] h-[15px] w-[15px] rounded-full border-[2.500px] border-white bg-[#3a3a3a]" />
              <span className="mt-[1px] ml-[10px] w-[67px]">Porträtt</span>
              <div className="mb-[8px] h-[16px] w-[16px] rounded-full border border-[#7e7e7e] bg-[#3a3a3a]" />
              <span className="mt-[1px] ml-[10px]">Landskap</span>
            </div>
            <div className="mt-[5px] flex h-[29px] w-[286px] items-center justify-center rounded-[5px] border border-[#333436] pb-[1px] font-['Liberation_Sans',sans-serif] text-[18px] text-[#c0c0c0]">Redigera data...</div>
            <div className="mt-[3px] flex h-[30px] w-[286px] items-center justify-center rounded-[5px] border border-[#333436] pb-[2px] font-['Liberation_Sans',sans-serif] text-[18px] text-[#c0c0c0]">Rensa standardstil</div>
          </div>
        </div>
      </div>

      {/* Page tabs */}
      <div className="flex h-[42px] shrink-0 items-center border-t border-[#353638] pl-[33px] text-[#b4b5b6]">
        <Svg w={14} h={14} vb="0 0 14 14"><path d="M7 0v14M0 7h14" stroke="currentColor" strokeWidth="2" /></Svg>
        <div className="ml-[36px]"><Svg w={18} h={14} vb="0 0 18 14"><path d="M0 1.500h18M0 7h18M0 12.500h18" stroke="currentColor" strokeWidth="1.800" /></Svg></div>
        <div className="ml-[29px] flex h-full w-[100px] items-center justify-center gap-[8px] bg-[#00375a] text-[18.500px] tracking-[-0.020em] text-[#4ba3f5]">
          <span className="ml-[11px] pt-[1px]">Sida-1</span>
          <Svg w={12} h={8} vb="0 0 12 8"><path d="M1 1l5 5 5-5" stroke="#b4c0ca" strokeWidth="1.400" /></Svg>
        </div>
      </div>

      <Taskbar />
    </div>
  );
}
